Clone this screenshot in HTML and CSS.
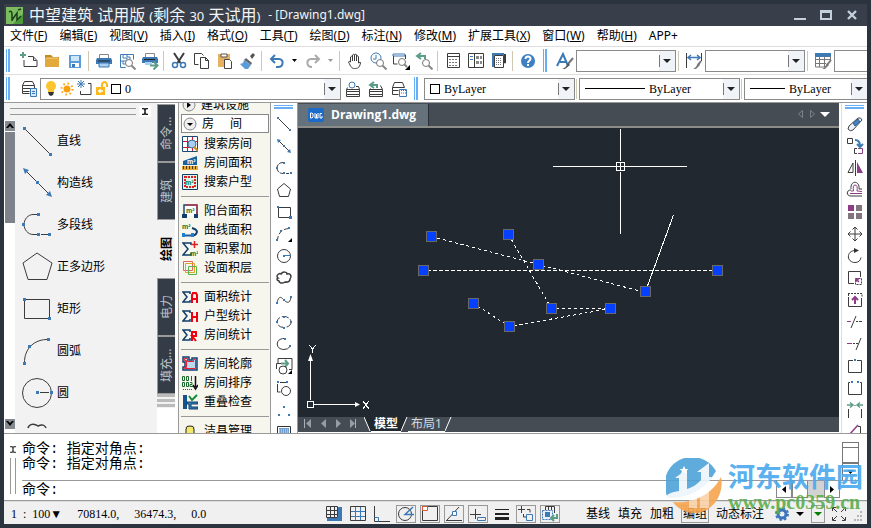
FILE: index.html
```html
<!DOCTYPE html>
<html lang="zh-CN">
<head>
<meta charset="utf-8">
<title>中望建筑</title>
<link rel="stylesheet" href="styles.css">
</head>
<body>
<div class="app">
<header class="title">
  <svg width="17" height="17"><rect width="17" height="17" rx="1" fill="#4a9a3a"/><path d="M0 0h17v7L7 17H0z" fill="#7cbc5e"/><path d="M3 5q3-2 3 2v7M6 13l5-7v7l4-4" fill="none" stroke="#173e18" stroke-width="1.500"/><path d="M12 3l3-1" stroke="#173e18" stroke-width="1.500"/></svg>
  <h1>中望建筑 试用版 <small>(</small>剩余 <small>30</small> 天试用<small>)</small></h1><span class="doc">- [Drawing1.dwg]</span>
  <div class="winbtns">
    <button aria-label="最小化"><svg width="13" height="12"><path d="M0 10h12" stroke="#c3cfda" stroke-width="2"/></svg></button>
    <button aria-label="最大化"><svg width="13" height="12"><path d="M1 2v8h10V2" fill="none" stroke="#c3cfda" stroke-width="2"/><path d="M0 2.500h12" stroke="#c3cfda" stroke-width="3"/></svg></button>
    <button aria-label="关闭"><svg width="13" height="12"><path d="M2 2l8 8M10 2l-8 8" stroke="#c3cfda" stroke-width="2.400"/></svg></button>
  </div>
</header>
<nav class="menu">
  <a href="#">文件(<u>F</u>)</a><a href="#">编辑(<u>E</u>)</a><a href="#">视图(<u>V</u>)</a><a href="#">插入(<u>I</u>)</a><a href="#">格式(<u>O</u>)</a><a href="#">工具(<u>T</u>)</a><a href="#">绘图(<u>D</u>)</a><a href="#">标注(<u>N</u>)</a><a href="#">修改(<u>M</u>)</a><a href="#">扩展工具(<u>X</u>)</a><a href="#">窗口(<u>W</u>)</a><a href="#">帮助(<u>H</u>)</a><a href="#">APP+</a>
</nav>

<div class="bar">
  <i class="grip"></i>
  <button class="tool" aria-label="新建"><svg width="18" height="18"><path class="k" d="M8 4.500h5l4 4v6h-13V8M13.500 4.500v4h3"/><path class="g w2" d="M0 3h6M3 0v6"/></svg></button>
  <button class="tool" aria-label="打开"><svg width="18" height="18"><path d="M2 3h6l2 2h6v2H2z" fill="#c48a1e"/><path d="M2 6h14v9H2z" fill="#e3a93a"/><path d="M3 6h12" stroke="#f5d48c"/></svg></button>
  <button class="tool" aria-label="保存"><svg width="18" height="18"><path d="M3 3h12v13H3z" fill="#5b9bd8"/><path d="M5 4h8v5H5z" fill="#cfe5f8"/><path d="M5 11h8v4H5z" fill="#fff"/><path d="M6 12h3v3H6z" fill="#3c78b4"/></svg></button>
  <i class="sep"></i>
  <button class="tool" aria-label="打印"><svg width="18" height="18"><path d="M4.500 2.500h9v5h-9z" fill="#fff" stroke="#888"/><path d="M2 6h14l1 2v4H1V8z" fill="#3c78b4"/><path d="M3 9h12" stroke="#222"/><path d="M4 11h10v4H4z" fill="#a9d0f2" stroke="#3c78b4"/></svg></button>
  <button class="tool" aria-label="打印预览"><svg width="18" height="18"><path class="b" d="M2.500 2.500h13v5M2.500 2.500v13h5M5 2v4h4v3H2M9 2v3h3v3M5 9v3h3"/><circle cx="11" cy="11" r="3.500" fill="#fff" stroke="#777"/><path d="M13.500 13.500l4 4" stroke="#888" stroke-width="2"/></svg></button>
  <button class="tool" aria-label="发布"><svg width="18" height="18"><path d="M4.500 1.500h9v4h-9z" fill="#fff" stroke="#888"/><path d="M2 5h14l1 2v4H1V7z" fill="#3c78b4"/><path d="M3 7.500h11" stroke="#222"/><path d="M4 10h7v3H4z" fill="#a9d0f2"/><path class="g w2" d="M9 13.500h7M12.500 9.500l4 4-4 4"/></svg></button>
  <i class="sep"></i>
  <button class="tool" aria-label="剪切"><svg width="18" height="18"><path class="k w2" d="M4 1l6.500 10M14 1L7.500 11"/><circle class="b w15" cx="5" cy="13" r="2.500"/><circle class="b w15" cx="13" cy="13" r="2.500"/></svg></button>
  <button class="tool" aria-label="复制"><svg width="18" height="18"><path class="k" d="M5.500 12.500h-4v-11h7l2 2"/><path d="M7.500 5.500h5l3 3v8h-8z" fill="#fff" stroke="#3c3c3c"/><path class="k" d="M12.500 5.500v3h3"/></svg></button>
  <button class="tool" aria-label="粘贴"><svg width="18" height="18"><path d="M2 2h12v13H2z" fill="#e5b264"/><path d="M5 2h6v3H5z" fill="#fff" stroke="#555"/><path d="M8.500 7.500h5l2 2v7h-7z" fill="#fff" stroke="#444"/></svg></button>
  <button class="tool" aria-label="格式刷"><svg width="18" height="18"><path d="M11 4l3-3 2 2-3 4z" fill="#555"/><path d="M7 6l6 5-1 2-7-5z" fill="#666"/><path d="M5 8l7 5-3 4H6l-5-5 3-1z" fill="#5b9bd8"/></svg></button>
  <i class="sep"></i>
  <button class="tool" aria-label="撤销"><svg width="18" height="18"><path d="M3 7h8c5 0 5 8-1 8H8M7 3L3 7l4 4" fill="none" stroke="#3d7ab5" stroke-width="2"/></svg></button>
  <button class="drop" aria-label="撤销列表"><svg width="7" height="4"><path d="M1 0h5L3.500 3z"/></svg></button>
  <button class="tool" aria-label="重做"><svg width="18" height="18"><path d="M15 7H7c-5 0-5 8 1 8M11 3l4 4-4 4" fill="none" stroke="#aaa" stroke-width="2"/></svg></button>
  <button class="drop" aria-label="重做列表"><svg width="7" height="4"><path fill="#999" d="M1 0h5L3.500 3z"/></svg></button>
  <i class="sep"></i>
  <button class="tool" aria-label="平移"><svg width="18" height="18"><path class="k" d="M4.500 10V5q1.500-2 2 0v4V3q1.500-2 2 0v6V3q1.500-2 2 0v6V4q1.500-1 2 1v6q2-2 2 0c-1 5-3 5.500-6 5.500S5 15 2.500 10q.5-1.500 2 0"/></svg></button>
  <button class="tool" aria-label="实时缩放"><svg width="18" height="18"><circle class="b" cx="7" cy="6" r="5"/><path class="b" d="M7 3v4H4"/><circle cx="11" cy="11" r="3.500" fill="#fff" stroke="#777"/><path d="M13.500 13.500l4 4" stroke="#888" stroke-width="2"/></svg></button>
  <button class="tool" aria-label="窗口缩放"><svg width="18" height="18"><path class="b" d="M1 2h12v2H1z"/><path class="k" d="M1.500 4v8h4M13.500 3v4"/><circle cx="10" cy="10" r="3.500" fill="#fff" stroke="#777"/><path d="M12 12l3 3" stroke="#888" stroke-width="2"/><path d="M18 13v5h-5z"/></svg></button>
  <button class="tool" aria-label="缩放上一个"><svg width="18" height="18"><path class="g w2" d="M3 4h7v3M6 1L2 4l4 3"/><circle cx="11" cy="11" r="3.500" fill="#fff" stroke="#777"/><path d="M13.500 13.500l4 4" stroke="#888" stroke-width="2"/></svg></button>
  <i class="sep"></i>
  <button class="tool" aria-label="特性"><svg width="18" height="18"><path class="k" d="M3.500 1.500h12v14h-12zM3 4.500h12"/><path stroke="#777" stroke-dasharray="2 1" d="M5 7.500h9M5 10.500h9M5 13.500h9"/></svg></button>
  <button class="tool" aria-label="设计中心"><svg width="18" height="18"><path class="k" d="M1.500 1.500h15v14h-15zM7.500 2v13"/><path class="b" d="M3 4.500h3M3 7.500h3"/><path d="M9 4h3v3H9zM13 4h2v3h-2zM9 9h3v3H9zM13 9h2v3h-2z" fill="#888"/></svg></button>
  <button class="tool" aria-label="工具选项板"><svg width="18" height="18"><path class="k" d="M4.500 3.500h9v12h-9z"/><path class="b w2" d="M2 2h12M3 3v12"/><path class="k" d="M14.500 2v9h1V2"/><path stroke="#777" stroke-dasharray="1 1" d="M6 6.500h6M6 8.500h6M6 10.500h6M6 12.500h6"/></svg></button>
  <i class="sep"></i>
  <button class="tool" aria-label="帮助"><svg width="18" height="18"><circle cx="9" cy="9" r="7" fill="#3d7fc1"/><path d="M6.500 7c0-3.500 5-3.500 5 0 0 1.500-2.500 1.500-2.500 4M9 12v2" fill="none" stroke="#fff" stroke-width="2"/></svg></button>
  <i class="grip mid"></i>
  <button class="tool" aria-label="文字样式"><svg width="18" height="18"><path class="b w2" d="M1 14L7 2l5 12M4 10h7"/><path d="M17 6l-5 6" stroke="#777" stroke-width="2"/><path d="M12 11l2 2-5 4H6q4-1 6-6" fill="#555"/></svg></button>
  <label class="combo w100"><select aria-label="文字样式"><option></option></select><span class="arrow"></span></label>
  <i class="sep"></i>
  <button class="tool" aria-label="标注样式"><svg width="18" height="18"><path class="k" d="M1.500 1v15M16.500 1v8"/><path class="b w15" d="M3 5.500h12M6 3L3 5.500 6 8M12 3l3 2.500L12 8"/><path d="M16 9l-3 4" stroke="#777" stroke-width="2"/><path d="M13 11l2 2-4 4H8q3-1 5-6" fill="#777"/></svg></button>
  <label class="combo w100"><select aria-label="标注样式"><option></option></select><span class="arrow"></span></label>
  <i class="sep"></i>
  <button class="tool" aria-label="表格样式"><svg width="18" height="18"><path d="M1 3h16" stroke="#3d7ab5" stroke-width="4"/><path d="M1.500 4v11h9M16.500 4v5M1 7.500h15M1 11.500h11M5.500 4v11M10.500 4v11" fill="none" stroke="#777"/><path d="M17 8l-4 5" stroke="#777" stroke-width="2"/><path d="M13 11l2 2-4 4H8q3-1 5-6" fill="#777"/></svg></button>
  <label class="combo fill"><select aria-label="表格样式"><option></option></select></label>
</div>

<div class="bar second">
  <i class="grip"></i>
  <button class="tool layer" aria-label="图层特性"><svg width="18" height="18"><path class="k" d="M4.500 1.500h8l2 4h-12zM2.500 5.500v3h12v-3M2.500 8.500v3h7M2.500 11.500v2h7"/><path d="M10.500 8.500h6v8h-6z" fill="#d8e9f8" stroke="#3d7ab5"/><path class="b" d="M12 11.500h3M12 13.500h3"/></svg></button>
  <label class="combo w300">
    <svg width="78" height="20"><circle cx="10" cy="7" r="5" fill="#fcc52e"/><path d="M7 10h6v3H7z" fill="#fcc52e"/><path d="M7 13h6l-1 3-2 1-2-1z" fill="#333"/><circle cx="26" cy="10" r="3.500" fill="#f7a111"/><circle cx="26" cy="10" r="5.500" fill="none" stroke="#f7a111" stroke-width="2" stroke-dasharray="1.500 2.800"/><path class="k" d="M47 4.500h3v11H39.500V12"/><path class="b" d="M40 1v8M36 5h8M37 2l6 6M43 2l-6 6"/><path d="M55 8h9v8h-9z" fill="#fcb81c"/><path d="M61 8V5q2.500-4 5 0v3" fill="none" stroke="#fcb81c" stroke-width="2"/><path d="M59 10v4M57 12h5" stroke="#fff" stroke-width="1.500"/></svg>
    <i class="swatch"></i><select aria-label="图层"><option>0</option></select><span class="arrow"></span></label>
  <button class="tool" aria-label="置为当前层"><svg width="18" height="18"><path class="k" d="M3.500 7.500l-1 2h13l-1-3H12M2.500 9.500v2h13v-2M2.500 11.500v3h13v-3M2.500 14.500v2h13v-2"/><circle class="b" cx="8" cy="5" r="3"/></svg></button>
  <button class="tool" aria-label="上一个图层"><svg width="18" height="18"><path class="k" d="M3.500 8.500l-1 1h13l-2-4M2.500 9.500v2h13v-2M2.500 11.500v3h13v-3M2.500 14.500v2h13v-2"/><path class="g w2" d="M4 5h6v3M7 2L3 5l4 3"/></svg></button>
  <button class="tool" aria-label="图层状态"><svg width="18" height="18"><path class="k" d="M4.500 2.500h8l2 5h-12zM2.500 7.500v3h6M2.500 10.500v4h6"/><path d="M9.500 9.500h7v7h-7z" fill="#fff" stroke="#3d7ab5"/><path class="b" d="M9 10.500h8M11 13h5" stroke-dasharray="1 1"/></svg></button>
  <i class="grip mid"></i>
  <label class="combo w150"><i class="swatch"></i><select aria-label="颜色"><option>ByLayer</option></select><span class="arrow"></span></label>
  <i class="sep"></i>
  <label class="combo w160"><i class="rule"></i><select aria-label="线型"><option>ByLayer</option></select><span class="arrow"></span></label>
  <i class="sep"></i>
  <label class="combo fill"><i class="rule short"></i><select aria-label="线宽"><option>ByLayer</option></select><span class="arrow"></span></label>
</div>

<main class="work">
  <section class="palette">
    <div class="phead"><i></i><button aria-label="关闭选项板"><svg width="8" height="7"><path d="M1 .5h2l1 2 1-2h2M1 6.500h2l1-2 1 2h2M4 2v3" fill="none" stroke="#222" stroke-width="1.500"/></svg></button></div>
    <div class="pbody">
      <div class="scroll"><button aria-label="向上"><svg width="8" height="6"><path d="M0 5l4-5 4 5-2 0-2-2-2 2z"/></svg></button><i class="thumb"></i><i class="track"></i><button aria-label="向下"><svg width="8" height="6"><path d="M0 0h2l2 2 2-2h2L4 5z"/></svg></button></div>
      <ul>
        <li><svg width="34" height="34"><path class="k" d="M4.500 4.500l26 26"/><path class="fb" d="M3 3h3v3H3zM29 29h3v3h-3z"/></svg>直线</li>
        <li><svg width="34" height="34"><path class="k" d="M6 5l24 24"/><path class="fb" d="M3 2l6 2-4 4zM32 31l-6-2 4-4zM16 15h3v3h-3z"/></svg>构造线</li>
        <li><svg width="34" height="34"><path class="k" d="M17 6.500h-4c-5 0-9 5-9 10s4 10 9 10h4M21 26.500h7"/><path class="fb" d="M17 5h3v3h-3zM2 15h3v3H2zM17 25h3v3h-3zM28 25h3v3h-3z"/></svg>多段线</li>
        <li><svg width="34" height="34"><path class="k" d="M17 3L3 13l5 16.500h19L32 13z"/></svg>正多边形</li>
        <li><svg width="34" height="34"><path class="k" d="M4.500 7.500h25v19h-25z"/><path class="fb" d="M3 6h3v3H3zM28 25h3v3h-3z"/></svg>矩形</li>
        <li><svg width="34" height="34"><path class="k" d="M28.500 5.500C15 5 4 14 4.500 29.500"/><path class="fb" d="M27 4h3v3h-3zM8 11h3v3H8zM3 28h3v3H3z"/></svg>圆弧</li>
        <li><svg width="34" height="34"><circle class="k" cx="17" cy="17" r="14.500"/><path class="k" d="M20 16.500h9"/><path class="fb" d="M16 15h3v3h-3zM30 15h3v3h-3z"/></svg>圆</li>
        <li><svg width="34" height="34"><path class="k w15" d="M8 10c1-4 6-5 10-2 4-2 7-1 8 2"/></svg></li>
      </ul>
    </div>
  </section>
  <div class="vtabs">
    <button>命令…</button><button>建筑</button><button class="on">绘图</button><button>电力</button><button>填充…</button><i class="stripes"></i>
  </div>
  <section class="arch">
    <div class="cut"><button class="cat"><svg width="14" height="14"><circle cx="7" cy="7" r="6" fill="#eee" stroke="#888"/><path d="M5 4l4 3-4 3z"/></svg>建筑设施</button></div>
    <button class="cat boxed"><svg width="14" height="14"><circle cx="7" cy="7" r="6" fill="#eee" stroke="#888"/><path d="M4 6h6l-3 3z"/></svg><span>房</span><span>间</span></button>
    <button><svg width="16" height="16"><path d="M.5.5h15v15H.5z" fill="#fff" stroke="#184a7a"/><path d="M5.500 1v14M10.500 1v14M1 5.500h14M1 11.500h10" stroke="#d01830" fill="none"/><circle cx="10" cy="8" r="4" fill="#a8cff0" stroke="#3b6da0"/><path d="M12 11l4 4" stroke="#c58a20" stroke-width="2"/></svg>搜索房间</button>
    <button><svg width="16" height="16"><path d="M1 9V6l14-5v9H1z" fill="#17619e"/><path d="M0 11h16v4H0z" fill="#e4a930"/><path d="M1 12.500h15" stroke="#4e3512" stroke-dasharray="1 2" stroke-width="3"/><text x="5" y="9" fill="#fff" class="m2">m²</text></svg>房间面积</button>
    <button><svg width="16" height="16"><path d="M.5.5h15v15H.5z" fill="#dcf5ec" stroke="#143d6b"/><path d="M3 3h10v10H3z" fill="none" stroke="#e02020" stroke-width="2" stroke-dasharray="2 1"/><text x="3" y="11" class="m2 dk">m²</text></svg>搜索户型</button>
    <hr>
    <button><svg width="16" height="16"><path d="M2 12V2h13v11" fill="#fff" stroke="#184a7a" stroke-width="1.500"/><path d="M3 2h12v9" fill="none" stroke="#e02020"/><path d="M0 11h5v4H0zM12 11h4v4h-4z" fill="#123d6b"/><text x="4" y="10" class="m2">m²</text></svg>阳台面积</button>
    <button><svg width="16" height="16"><text x="0" y="7" class="m2">m²</text><path d="M1 13.500h10" stroke="#1d5b9a" stroke-width="2"/><path d="M10 6q7 2 4 6-2 2-4 1" fill="none" stroke="#123d6b" stroke-width="2"/><path d="M0 11h3v4H0zM9 11h3v4H9z" fill="#1e7fd0"/></svg>曲线面积</button>
    <button><svg width="16" height="16"><path d="M9 4V2H1l5 6-5 6h8v-2" fill="none" stroke="#123d6b" stroke-width="1.500"/><path d="M12.500 0v7M9 3.500h7" stroke="#e02020" stroke-width="1.500"/><text x="8" y="15" class="m2">m²</text></svg>面积累加</button>
    <button><svg width="16" height="16"><path d="M1.500 1.500h9v9h-9z" fill="none" stroke="#e06464"/><path d="M3.500 3.500h9v9h-9z" fill="none" stroke="#d6a820"/><path d="M6.500 6.500h8v8h-8z" fill="none" stroke="#57b84d"/></svg>设面积层</button>
    <hr>
    <button><svg width="16" height="16"><path d="M8 5V3H1l4 5-4 5h7v-2" fill="none" stroke="#123d6b" stroke-width="1.500"/><path d="M10 14V6l1-2h3l1 2v8M10 10h5" fill="none" stroke="#f00010" stroke-width="2"/></svg>面积统计</button>
    <button><svg width="16" height="16"><path d="M8 5V3H1l4 5-4 5h7v-2" fill="none" stroke="#123d6b" stroke-width="1.500"/><path d="M10 4v10M15 4v10M10 9h5" fill="none" stroke="#f00010" stroke-width="2"/></svg>户型统计</button>
    <button><svg width="16" height="16"><path d="M8 5V3H1l4 5-4 5h7v-2" fill="none" stroke="#123d6b" stroke-width="1.500"/><path d="M10 14V5h4v4h-4l4 5" fill="none" stroke="#f00010" stroke-width="2"/></svg>房间统计</button>
    <hr>
    <button><svg width="16" height="16"><path d="M1 1h6v3h3V2h5v12H1v-3h2V6H1z" fill="#bcd8ee" stroke="#18406f" stroke-width="1.500"/><path d="M2.500 2.500h3v3h6v-2h2v9h-11v-1h2v-7h-2z" fill="#bcd8ee" stroke="#e82030"/></svg>房间轮廓</button>
    <button><svg width="16" height="16"><g fill="none" stroke="#1d6b2c"><path d="M.5 1.500h2v4h-2zM4.500 1.500h2v4h-2zM9.500 1v5M.5 7.500h2v4h-2zM4.500 7.500h2v4h-2zM8 7.500h2v2h-2v2h3"/><path stroke-dasharray="1 1" d="M1 14.500h10"/></g><path d="M13.500 1v11M11 10l2.500 4 2.500-4" stroke="#111" fill="none" stroke-width="1.500"/></svg>房间排序</button>
    <button><svg width="16" height="16"><path d="M1 1h4v14H1z" fill="#14548c"/><path d="M5 8h11v2H9v3h7v2H7v-5H5z" fill="#2f82bb" stroke="#123d6b"/><path d="M7 2l3 4 5-5" stroke="#178a38" stroke-width="2" fill="none"/></svg>重叠检查</button>
    <hr>
    <button><svg width="16" height="16"><ellipse cx="8" cy="5" rx="4" ry="2" fill="#f2e96b" stroke="#222"/><path d="M4 6v6q4 3 8 0V6" fill="#f2e96b" stroke="#222"/></svg>洁具管理</button>
  </section>
  <div class="tcol">
    <i class="hgrip"></i>
    <button aria-label="直线"><svg width="18" height="18"><path class="k" d="M3 3l12 12"/><path class="fb" d="M2 2h2v2H2zM14 14h2v2h-2z"/></svg></button>
    <button aria-label="构造线"><svg width="18" height="18"><path class="k" d="M4 4l11 11"/><path class="fb" d="M2 2l4 1-3 3zM16 16l-4-1 3-3zM8 8h2v2H8z"/></svg></button>
    <button aria-label="多段线"><svg width="18" height="18"><path class="k" d="M8 3.500c-8 0-8 11 0 11M11 14.500h3" stroke-dasharray="4 1"/><path class="fb" d="M8 3h2v2H8zM1 8h2v2H1zM8 13h2v2H8zM15 13h2v2h-2z"/></svg></button>
    <button aria-label="多边形"><svg width="18" height="18"><path class="k" d="M9 2.500L2.500 8l2 7.500h9l2-7.500z"/></svg></button>
    <button aria-label="矩形"><svg width="18" height="18"><path class="k" d="M3.500 4.500h12v10h-12z"/><path class="fb" d="M2 3h2v2H2zM14 13h3v3h-3z"/></svg></button>
    <button aria-label="圆弧"><svg width="18" height="18"><path class="k" d="M14 3.500C7 4 3 8 2.500 15" stroke-dasharray="5 2"/><path class="fb" d="M13 2h2v2h-2zM5 5h2v2H5zM1 14h2v2H1z"/><path d="M17 13v4h-4z"/></svg></button>
    <button aria-label="圆"><svg width="18" height="18"><circle class="k" cx="9" cy="9" r="6.500"/><path class="b" d="M9 8.500h7"/><path class="fb" d="M8 8h2v2H8z"/></svg></button>
    <button aria-label="云线"><svg width="18" height="18"><path class="k w15" d="M3 9c-3-3 2-5 3-4 2-3 6-2 6 0 4-1 5 3 3 5 0 4-5 3-5 3-3 2-6 1-6-1-3-1-2-3-1-3z"/></svg></button>
    <button aria-label="样条曲线"><svg width="18" height="18"><path class="k" d="M2 12c2-9 5-5 7-3s6 5 7-3"/><path class="fb" d="M1 11h2v2H1zM8 8h2v2H8zM15 5h2v2h-2z"/></svg></button>
    <button aria-label="椭圆"><svg width="18" height="18"><ellipse class="k" cx="9" cy="9" rx="7" ry="5.500" stroke-dasharray="7 2"/><path class="fb" d="M8 3h2v2H8zM1 8h2v2H1zM15 8h2v2h-2zM8 14h2v2H8z"/></svg></button>
    <button aria-label="椭圆弧"><svg width="18" height="18"><path class="k" d="M9 3.500c-9 0-9 11 0 11q4 0 6-3"/><path class="fb" d="M9 3h2v2H9zM14 10h2v2h-2z"/></svg></button>
    <button aria-label="插入块"><svg width="18" height="18"><path class="k" d="M3 6.500V1.500h14v11h-3M1.500 12V6.500H7"/><path class="g w2" d="M6 6.500h7M10 3l3 3.500-3 3.500"/><circle class="k" cx="8" cy="13" r="4"/><path d="M17 13v4h-4z"/></svg></button>
    <button aria-label="创建块"><svg width="18" height="18"><path class="k" d="M5 3.500h7M2.500 5v8h3"/><circle class="k" cx="11" cy="12" r="4.500"/><path class="fb" d="M2 2h2v2H2zM11 2h2v2h-2z"/></svg></button>
    <button aria-label="点"><svg width="18" height="18"><path class="fb" d="M8 5h2v2H8zM3 13h2v2H3zM13 13h2v2h-2z"/></svg></button>
    <button aria-label="填充"><svg width="18" height="18"><path d="M2.500 3.500h13v14h-13z" fill="#fff" stroke="#333"/><path d="M4 5h10v12H4z" fill="#6f9fd0"/><path d="M4 7h10M4 9h10M4 11h10" stroke="#dcebf9" stroke-dasharray="1 1"/></svg></button>
  </div>
  <section class="drawing">
    <div class="doctabs">
      <button class="dtab"><svg width="16" height="14"><rect width="16" height="14" rx="2" fill="#1c6bc8"/><path d="M2.500 5v5h1.500l1-1V6L4 5zM7 5v5h3V5M8.500 6v4M14 5.500h-2v4.500h2V8" fill="none" stroke="#fff"/></svg>Drawing1.dwg</button>
      <svg class="tabnav" width="38" height="12"><path d="M6.500 2.500v7l-4-3.500zM14.500 2.500v7l4-3.500z" fill="none" stroke="#7b838b"/><path d="M24 4h10l-5 5z" fill="#fff"/></svg>
    </div>
    <div class="canvas">
      <svg width="100%" height="100%"><g transform="translate(-298 -128)">
        <g stroke="#fff" fill="none" shape-rendering="crispEdges">
          <path d="M620.500 129v32M620.500 172v62M553 166.500h63M625 166.500h62M616.500 162.500h8v8h-8zM620.500 163v8M617 166.500h8"/>
          <path d="M673.500 215L646 290M310.500 359v41M314 404.500h42M307.500 401.500h6v6h-6z"/>
          <path stroke-dasharray="4 2" d="M427 270.500h290"/>
          <path stroke-dasharray="3 3" d="M431.500 236.500l107 28 107 28M508.500 234.500l43 74h59l-101 18-36-23"/>
          <path d="M309 345l3.500 4 3.500-4M312.500 349v4M363 401l6 8M369 401l-6 8"/>
        </g>
        <path d="M308 361h5l-2.500-7zM355 402v5l5-2.500z" fill="#fff"/>
        <g fill="#0540ff" stroke="#686868" shape-rendering="crispEdges"><path d="M426.500 231.500h10v10h-10zM503.500 229.500h10v10h-10zM533.500 259.500h10v10h-10zM418.500 265.500h10v10h-10zM712.500 265.500h10v10h-10zM640.500 286.500h10v10h-10zM468.500 298.500h10v10h-10zM546.500 303.500h10v10h-10zM605.500 303.500h10v10h-10zM504.500 321.500h10v10h-10z"/></g>
      </g></svg>
    </div>
    <div class="layouts">
      <svg width="66" height="15"><path d="M6.500 2v9M57.500 2v9" stroke="#a8afb5"/><path d="M13 2v9L8 6.500zM28 2v9l-5-4.500zM38 2v9l5-4.500zM52 2v9l5-4.500z" fill="#969da4"/></svg>
      <svg width="7" height="15"><path d="M0 0l6 14h1V0z" fill="#212830"/><path d="M0 0l6 14" stroke="#fff"/></svg><button class="on">模型</button><svg width="7" height="15"><path d="M0 0h6L0 14z" fill="#212830"/><path d="M6 0L0 14" stroke="#fff"/></svg><button>布局1</button><svg width="7" height="15"><path d="M6 0L0 14" stroke="#fff"/></svg>
    </div>
  </section>
  <div class="tcol right">
    <i class="hgrip"></i>
    <button aria-label="删除"><svg width="18" height="18"><path d="M3 11L12 3q3-1 4 2L7 15q-3 2-5-1z" fill="#eaf3fb" stroke="#444"/><path d="M7 8l5-4 2 3-5 4z" fill="#4583bf" stroke="#2d5f96"/></svg></button>
    <button aria-label="复制"><svg width="18" height="18"><path class="k" d="M1.500 1.500h5v5h-5zM11 16.500H8.500v-5H11"/><path d="M12 11.500h4.500v5H12" class="p"/><path class="b w2" d="M9 3q5 0 5 6M11 7l3 3 3-3"/></svg></button>
    <button aria-label="镜像"><svg width="18" height="18"><path class="k" d="M9.500 1v16M7 4v9.500H2z"/><path d="M11 3v11h6z" fill="#8c3d86"/></svg></button>
    <button aria-label="偏移"><svg width="18" height="18"><path class="k" d="M5 8c-1-9 9-9 8 0h3M5 9c-5 0-5 6 0 6h11"/><path class="p" d="M7.500 10q-1-6 1.500-6 3 0 2 6l5 .5M4 12.500h12M7.500 10H5"/></svg></button>
    <button aria-label="阵列"><svg width="18" height="18"><path d="M2 2h6v6H2z" fill="#8c3d86"/><path d="M10 2h6v6h-6zM2 10h6v6H2zM10 10h6v6h-6z" fill="#83757f"/></svg></button>
    <button aria-label="移动"><svg width="18" height="18"><path class="k" d="M9 2v14M2 9h14M6.500 4.500L9 2l2.500 2.500M6.500 13.500L9 16l2.500-2.500M4.500 6.500L2 9l2.500 2.500M13.500 6.500L16 9l-2.500 2.500"/></svg></button>
    <button aria-label="旋转"><svg width="18" height="18"><path class="k" d="M10 3.500C0 3 0 15.500 9 15.500q5 0 6-5"/><path d="M8 1v5l5-2.500z" fill="#333"/></svg></button>
    <button aria-label="缩放"><svg width="18" height="18"><path class="k" d="M8 14.500H2.500v-12h12V8"/><path class="k" stroke-dasharray="2 1" d="M9.500 9.500h6v6h-6z"/><path class="p w15" d="M10 13v-3h3M10 10l3 3"/></svg></button>
    <button aria-label="拉伸"><svg width="18" height="18"><path class="k" d="M2.500 7v8.500h13V7"/><path class="k" stroke-dasharray="2 1" d="M2 2.500h14v4M2.500 3v4"/><path class="p w2" d="M9 13V7M6 9l3-3 3 3"/></svg></button>
    <button aria-label="修剪"><svg width="18" height="18"><path class="p" d="M1 8.500h4"/><path class="k" d="M5 15L10 3M10 8.500h2M13 8.500h3"/></svg></button>
    <button aria-label="延伸"><svg width="18" height="18"><path class="p" d="M1 8.500h5"/><path class="k" d="M7 8.500h2M10 8.500h2M10 15l5-12"/></svg></button>
    <button aria-label="打断于点"><svg width="18" height="18"><path class="k" d="M7 3.500H2.500v12h13v-12H11"/><path class="fb" d="M8 2h2v2H8z"/></svg></button>
    <button aria-label="打断"><svg width="18" height="18"><path class="k" d="M4 3.500H2.500v12h13v-12H14"/><path class="fb" d="M5 2h2v2H5zM11 2h2v2h-2z"/></svg></button>
    <button aria-label="合并"><svg width="18" height="18"><path class="k" d="M2.500 8v9M15.500 8v9M9 4v1"/><path class="g w15" d="M1 4h6M4 1.500L7 4 4 6.500M17 4h-6M14 1.500L11 4l3 2.500"/></svg></button>
    <button aria-label="倒角"><svg width="18" height="18"><path class="p w15" d="M3 12l9-10"/><path class="k" d="M12 3.500h2.500V16"/></svg></button>
  </div>
</main>

<section class="command">
  <div class="cside"><button aria-label="关闭命令行"><svg width="8" height="7"><path d="M1 .5h2l1 2 1-2h2M1 6.500h2l1-2 1 2h2M4 2v3" fill="none" stroke="#555" stroke-width="1.500"/></svg></button><i></i></div>
  <div class="cbody">
    <div class="hist"><div class="log">命令: 指定对角点:<br>命令: 指定对角点:</div>
      <div class="vs"><i></i><i class="th"></i><button aria-label="向下滚动"><svg width="7" height="4"><path d="M0 0h7L3.500 4z"/></svg></button></div></div>
    <div class="entry"><label for="cmd">命令:</label><input id="cmd" type="text">
      <div class="hs"><button aria-label="向左滚动"><svg width="4" height="7"><path d="M4 0v7L0 3.500z"/></svg></button><i></i><i class="gy"></i><button aria-label="向右滚动"><svg width="4" height="7"><path d="M0 0v7l4-3.500z"/></svg></button></div></div>
  </div>
</section>

<footer class="status">
  <div class="coords"><span class="scale">1&nbsp; : &nbsp;100▼</span><span>70814.0,</span><span>36474.3,</span><span>0.0</span></div>
  <div class="toggles">
    <button aria-label="捕捉"><svg width="16" height="16"><path d="M12 1h4v14H1v-3h11z" fill="#3d7ab5"/><path class="k" d="M.5.5h11v11H.5zM4.500 0v12M8.500 0v12M0 4.500h12M0 8.500h12"/></svg></button>
    <button aria-label="栅格"><svg width="16" height="16"><path class="b" d="M5.500 0v15M10.500 0v15M0 5.500h16M0 10.500h16"/><path class="k" d="M.5.500h15v14H.5z"/></svg></button>
    <button aria-label="正交"><svg width="16" height="16"><path class="k" d="M.5 0v15.500H16"/><path class="b" d="M.5 11.500h4v4"/></svg></button>
    <button class="on" aria-label="极轴"><svg width="16" height="16"><circle class="k" cx="7" cy="8" r="6.500"/><path class="b w15" d="M15 1L7 8.500h9"/></svg></button>
    <button class="on" aria-label="对象捕捉"><svg width="16" height="16"><path class="k" d="M.5.500h15v14H.5z"/><path d="M.5.500h5v4h-5z" fill="#fff" stroke="#db5539"/></svg></button>
    <button class="on" aria-label="追踪"><svg width="16" height="16"><path class="k" d="M0 14.500h16M1 14L13 1"/><path d="M6.500 5.500h4v4h-4z" fill="#fff" stroke="#3d7ab5"/></svg></button>
    <button class="on" aria-label="动态输入"><svg width="16" height="16"><path class="k" d="M5.500 3v10M0 8.500h11"/><path class="b" d="M7.500 11.500h8v3h-8z"/></svg></button>
    <button aria-label="线宽"><svg width="16" height="16"><path d="M1 3.500h14" stroke="#222"/><path d="M1 8h14" stroke="#222" stroke-width="2"/><path d="M1 12.500h14" stroke="#222" stroke-width="3"/></svg></button>
    <button class="on" aria-label="循环选择"><svg width="16" height="16"><path class="k" d="M3.500 0v7M0 3.500h7M9 3.500h3v3M5.500 8v3h3"/><path class="b" d="M8.500 8.500h6v6h-6z"/></svg></button>
    <button class="on" aria-label="注释"><svg width="16" height="16"><path class="k" d="M3.500 4V.5h9V7M6.500 0v4M9.500 0v4"/><path d="M.5 4.500h10v9H.5z" fill="#e8f1fa" stroke="#3d7ab5" stroke-dasharray="2 1"/><path class="fb" d="M3 6h5v5H3z"/><path class="g w2" d="M15 8v4H9M12 9l-3 3 3 3"/></svg></button>
  </div>
  <div class="modes"><button>基线</button><button>填充</button><button>加粗</button><button class="on">编组</button><button>动态标注</button></div>
  <div class="tray">
    <button aria-label="设置"><svg width="14" height="14"><circle cx="7" cy="7" r="4" fill="none" stroke="#3d76bd" stroke-width="3"/><circle cx="7" cy="7" r="6" fill="none" stroke="#3d76bd" stroke-width="2" stroke-dasharray="2.400 2.300"/></svg></button>
    <button aria-label="设置列表"><svg width="8" height="4"><path d="M0 0h8L4 4z"/></svg></button>
    <button class="green" aria-label="更多"><svg width="8" height="4"><path d="M0 0h8L4 4z" fill="#008000"/></svg></button>
    <button aria-label="全屏"><svg width="14" height="14"><path class="k" d="M.5 4V.5H4M10 .5h3.500V4M.5 10v3.500H4M13.500 10v3.500H10M1 1l4 4M13 1L9 5M1 13l4-4M13 13L9 9"/></svg></button>
    <svg width="10" height="14"><path d="M7 4h2v2H7zM4 8h2v2H4zM7 8h2v2H7zM1 12h2v2H1zM4 12h2v2H4zM7 12h2v2H7z" fill="#b5b5b5"/></svg>
  </div>
</footer>

<div class="mark" aria-hidden="true">
  <svg width="58" height="58"><path d="M2 40A27 27 0 1 1 50 13Q34 41 2 40z" fill="#4ea3d8"/><path d="M55 19c4 20-12 38-28 36-8 0-16-5-20-11 18 2 38-6 48-25z" fill="#f7a54e"/><path d="M8 34l5-1V20H9l12-9v20c8-3 10-5 14-9v-8h-4l12-9v14h3c-9 15-24 23-44 22-4-2-1-5 6-7z" fill="#fff" opacity=".9"/><path d="M23 38h8v12h-8zM34 32h9v18h-9z" fill="#fff" opacity=".5"/><path d="M18 8l1.500 3h3L20 13l1 3-3-2-3 2 1-3-2.500-2h3z" fill="#fff"/></svg>
  <div><strong>河东软件园</strong><em>www.pc0359.cn</em></div>
</div>
</div>
</body>
</html>
```
FILE: styles.css
```css
* { box-sizing: border-box; }
body { margin: 0; }
.app {
  position: relative;
  display: flex;
  flex-direction: column;
  height: 100vh;
  border: 4px solid #2a333e;
  background: #fff;
  color: #000;
  font: 12px/16px "Noto Sans", "Noto Sans CJK SC", sans-serif;
  overflow: hidden;
}
button, select, input { font: inherit; color: inherit; border: 0; padding: 0; margin: 0; background: none; border-radius: 0; }
select { appearance: none; }
svg { display: block; flex: none; }
i { display: block; flex: none; }
.k { stroke: #3c3c3c; fill: none; }
.b { stroke: #3d7ab5; fill: none; }
.g { stroke: #5c9d88; fill: none; }
.p { stroke: #8c3d86; fill: none; }
.fb { fill: #3d7ab5; }
.w15 { stroke-width: 1.5; }
.w2 { stroke-width: 2; }

.title { flex: none; display: flex; align-items: center; height: 22px; padding: 0 8px 0 2px; background: #383f4a; color: #f2f4f6; }
.title h1 { margin: 0 0 0 6px; font-size: 16px; line-height: 22px; font-weight: 400; white-space: nowrap; }
.title small { font-size: 13px; }
.doc { margin-left: 8px; font-size: 12px; line-height: 22px; white-space: nowrap; }
.winbtns { display: flex; gap: 13px; margin-left: auto; }

.menu { flex: none; display: flex; gap: 12px; height: 21px; padding: 2px 6px; border-bottom: 1px solid #dedede; white-space: nowrap; }
.menu a { color: #000; text-decoration: none; }

.bar { flex: none; display: flex; align-items: center; height: 28px; padding-left: 2px; border-bottom: 1px solid #dedede; overflow: hidden; }
.bar.second { height: 27px; border-bottom: 0; }
.grip { width: 4px; height: 23px; margin-right: 7px; border-left: 1px solid #67aff5; border-right: 2px solid #67aff5; }
.grip.mid { margin: 0 6px 0 4px; }
.tool { flex: none; display: flex; justify-content: center; width: 23px; }
.drop { flex: none; display: flex; justify-content: center; width: 13px; }
.sep { width: 2px; height: 20px; margin: 0 2px; background: linear-gradient(90deg, #cfc9b4 50%, #fff 50%); }
.second .sep { margin: 0 1px; }
.combo { flex: none; display: flex; align-items: center; height: 22px; border: 1px solid #8a8a8a; background: #fff; font-family: "Liberation Serif", serif; }
.combo select { flex: 1; min-width: 0; height: 20px; padding-left: 4px; }
.arrow { flex: none; width: 16px; height: 20px; background: #f0f4f8 linear-gradient(#777, #777) 0 4px / 1px 12px no-repeat; display: flex; align-items: center; justify-content: center; }
.arrow::after { content: ""; border: 4px solid transparent; border-top-color: #222; border-bottom: 0; }
.w100 { width: 100px; }
.w150 { width: 151px; }
.w160 { width: 161px; }
.w300 { width: 301px; }
.combo.fill { flex: 1; min-width: 0; border-right: 0; overflow: hidden; }
.swatch { width: 10px; height: 10px; border: 1px solid #000; }
.w300 .swatch { margin-left: -8px; }
.w150 .swatch { margin-left: 5px; }
.rule { width: 60px; height: 1px; margin-left: 5px; background: #000; }
.rule.short { width: 35px; }

.work { flex: 1; min-height: 0; display: flex; border-top: 1px solid #999; border-bottom: 1px solid #999; overflow: hidden; }
.palette { flex: none; display: flex; flex-direction: column; width: 153px; }
.phead { flex: none; display: flex; align-items: center; gap: 3px; height: 17px; padding: 0 6px; background: #f2f2f2; }
.phead i { flex: 1; height: 7px; border: solid #999; border-width: 1px 0; }
.phead button { padding: 2px; background: #fff; }
.pbody { flex: 1; min-height: 0; display: flex; }
.scroll { display: flex; flex-direction: column; width: 11px; padding: 1px 0 4px 1px; }
.scroll button { display: flex; align-items: center; justify-content: center; height: 10px; background: #858990; }
.thumb { height: 91px; margin-top: 1px; background: #7d828b; }
.track { flex: 1; }
.palette ul { flex: 1; margin: 0; padding: 0 0 0 5px; list-style: none; background: #f2f2f2; overflow: hidden; }
.palette li { display: flex; align-items: center; gap: 3px; height: 42px; }
.vtabs { flex: none; display: flex; flex-direction: column; width: 18px; padding-top: 1px; }
.vtabs button { display: flex; align-items: center; justify-content: center; height: 58px; border: 1px solid #999; border-left: 0; background: #343c47; color: #bfc3c8; writing-mode: vertical-rl; text-orientation: sideways; transform: rotate(180deg); }
.vtabs .on { background: #f2f2f2; color: #000; font-weight: 700; border-color: #f2f2f2; }
.stripes { height: 14px; background: repeating-linear-gradient(#bbb 0 3px, #f2f2f2 3px 5px); }
.arch { flex: none; display: flex; flex-direction: column; width: 93px; margin-left: 3px; padding: 0 1px 0 2px; border: solid #999; border-width: 0 1px; background: #f6f6ee; overflow: hidden; }
.arch button { flex: none; display: flex; align-items: center; gap: 6px; height: 19px; padding-left: 1px; white-space: nowrap; }
.arch hr { flex: none; width: 100%; height: 1px; margin: 5px 0 4px; border: 0; background: #999; }
.cut { flex: none; display: flex; align-items: flex-end; height: 11px; overflow: hidden; }
.arch .cat { gap: 5px; }
.arch .boxed { gap: 16px; margin-bottom: 1px; border: 1px solid #888; background: #fff; }
.arch .boxed svg { margin-right: -11px; }
.m2 { font: bold 7px "Liberation Sans", sans-serif; fill: #0a7a30; }
.m2[fill] { fill: #fff; }
.tcol { flex: none; display: flex; flex-direction: column; width: 26px; padding: 2px 1px 0 0; overflow: hidden; }
.tcol button { flex: none; display: flex; align-items: center; justify-content: center; height: 22px; }
.hgrip { height: 4px; margin: 0 3px 4px; border: solid #67aff5; border-width: 1px 0 2px; }
.tcol.right { margin-left: 2px; padding-right: 0; border-left: 1px solid #ddd; }
.drawing { flex: 1; min-width: 0; display: flex; flex-direction: column; padding-bottom: 1px; border-left: 1px solid #999; }
.doctabs { flex: none; display: flex; align-items: flex-end; height: 25px; border-bottom: 2px solid #8b8b88; background: #454c54; }
.dtab { display: flex; align-items: center; gap: 7px; height: 22px; padding: 0 12px 0 10px; border-right: 1px solid #2a2f35; background: #65727c; color: #fff; font: bold 12px/20px "Open Sans", sans-serif; }
.tabnav { margin: 0 5px 6px auto; }
.canvas { flex: 1; min-height: 0; background: #212830; overflow: hidden; }
.layouts { flex: none; display: flex; height: 15px; background: #454c54; color: #d5dadf; }
.layouts button { padding: 0 3px; line-height: 14px; height: 15px; border-bottom: 1px solid #fff; }
.layouts .on { background: #212830; color: #fff; font-weight: 700; }

.command { flex: none; display: flex; height: 67px; border-bottom: 1px solid #999; }
.cside { display: flex; flex-direction: column; width: 18px; padding: 10px 4px 6px; }
.cside button { padding: 2px 1px; }
.cside i { flex: 1; margin: 3px 2px 0; border: solid #999; border-width: 0 1px; }
.cbody { flex: 1; min-width: 0; display: flex; flex-direction: column; font: 14px/15px "Liberation Mono", "Noto Sans CJK SC", monospace; }
.hist { display: flex; height: 47px; border-bottom: 1px solid #999; margin-right: 8px; }
.log { flex: 1; padding-top: 8px; }
.vs { display: flex; flex-direction: column; width: 17px; padding-top: 8px; }
.vs i { height: 5px; border: 1px solid #777; border-bottom: 0; }
.vs .th { height: 17px; border-bottom: 2px solid #777; border-top: 1px solid #777; }
.vs button { flex: 1; display: flex; align-items: center; justify-content: center; border: 1px solid #777; border-top: 0; border-bottom: 0; }
.entry { flex: 1; display: flex; align-items: center; padding-right: 27px; }
.entry input { flex: 1; min-width: 0; outline: 0; }
.hs { display: flex; align-self: flex-start; height: 17px; }
.hs > * { display: flex; align-items: center; justify-content: center; width: 16px; border: 1px solid #888; border-top: 0; }
.hs .gy { background: #d2d2d2; border: 0; }

.status { flex: none; display: flex; align-items: center; height: 23px; padding: 1px 4px 0 7px; border-top: 1px solid #ddd; background: #f0f0f0; white-space: nowrap; }
.coords { display: flex; gap: 15px; width: 313px; font-family: "Liberation Serif", serif; }
.coords .scale { min-width: 47px; }
.toggles { display: flex; gap: 4px; }
.toggles button { display: flex; align-items: center; justify-content: center; width: 20px; height: 18px; border: 1px solid transparent; }
.toggles .on { border-color: #999; }
.modes { display: flex; gap: 6px; margin-left: 25px; align-items: center; }
.modes button { padding: 0 1px; }
.modes .on { border: 1px solid #999; }
.tray { display: flex; align-items: center; gap: 7px; margin-left: auto; }
.tray button { display: flex; }
.tray .green { height: 18px; align-items: center; padding: 0 2px; border: 1px solid #999; }

.mark { position: absolute; right: 4px; bottom: 8px; display: flex; align-items: center; gap: 4px; opacity: .9; pointer-events: none; }
.mark div { display: flex; flex-direction: column; }
.mark strong { font: 700 27px/30px "Noto Sans CJK SC", sans-serif; color: #4aa9ee; }
.mark em { font: 700 20px/22px "Liberation Serif", serif; color: #5cae4c; }
```
